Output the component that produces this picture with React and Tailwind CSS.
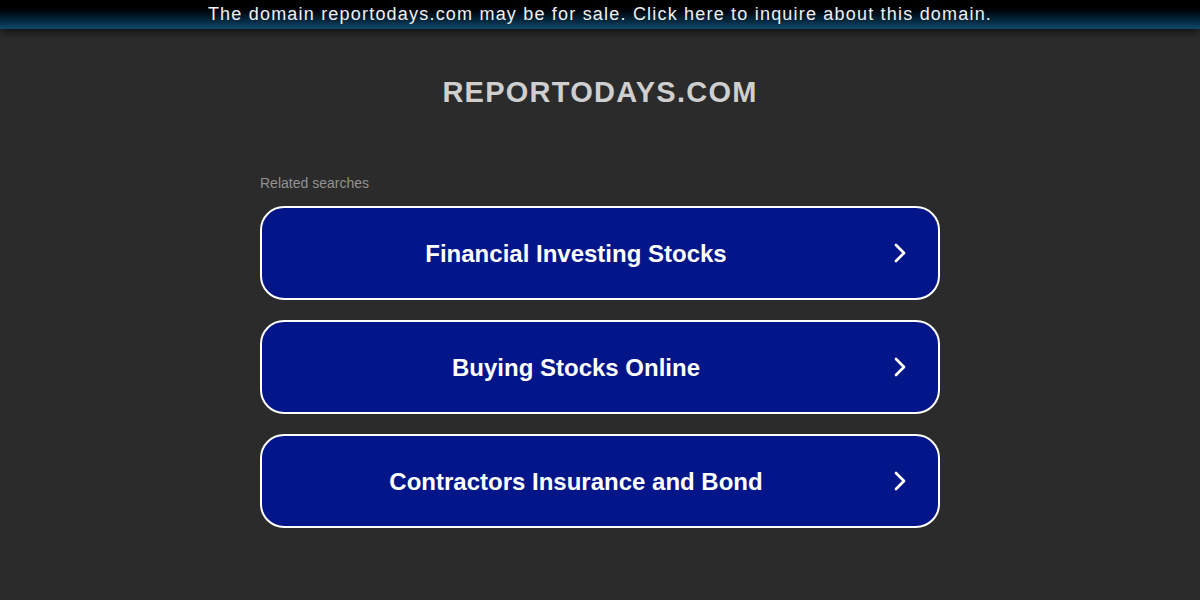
import { ChevronRight } from 'lucide-react';

const searches = [
  'Financial Investing Stocks',
  'Buying Stocks Online',
  'Contractors Insurance and Bond',
];

export default function App() {
  return (
    <div className="min-h-[600px] bg-[#2b2b2b] font-['Liberation_Sans',Arial,sans-serif]">
      <a
        href="#"
        className="block h-[29px] bg-gradient-to-b from-[#000000] from-10% to-[#0d4a6e] text-center text-[18px] leading-[28px] tracking-[1.2px] text-[#f0f0f0] shadow-[0_3px_8px_rgba(0,0,0,0.6)]"
      >
        The domain reportodays.com may be for sale. Click here to inquire about this domain.
      </a>

      <div className="pt-[45px] text-center">
        <h1 className="text-[29px] font-bold leading-[36px] tracking-[1.25px] text-[#cfcfcf]">
          REPORTODAYS.COM
        </h1>
      </div>

      <div className="mx-auto mt-[64px] w-[680px]">
        <p className="text-[14px] leading-[18px] text-[#929292]">Related searches</p>
        <div className="mt-[14px] flex flex-col gap-[20px]">
          {searches.map((s) => (
            <a
              key={s}
              href="#"
              className="relative flex h-[94px] items-center justify-center rounded-[24px] border-2 border-white bg-[#021689] pt-[2px] text-[24px] font-bold text-white"
            >
              <span className="-ml-[48px]">{s}</span>
              <ChevronRight
                className="absolute right-[22px] top-1/2 h-[32px] w-[32px] -translate-y-1/2"
                strokeWidth={2}
              />
            </a>
          ))}
        </div>
      </div>
    </div>
  );
}
